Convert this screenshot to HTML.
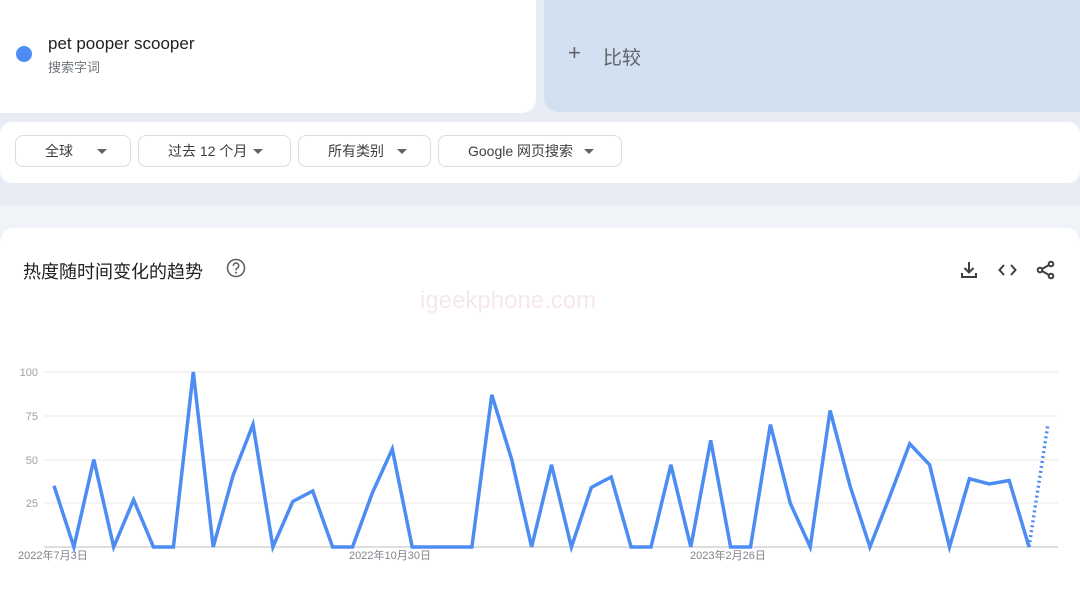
<!DOCTYPE html>
<html><head><meta charset="utf-8"><style>
body{margin:0;width:1080px;height:591px;overflow:hidden;background:#e8edf5;font-family:"Liberation Sans","Noto Sans CJK SC",sans-serif;position:relative}
.abs{position:absolute}
.btn{position:absolute;top:135px;height:32px;border:1px solid #dadce0;border-radius:8px;background:#fff;box-sizing:border-box;font-size:14px;color:#3c4043;line-height:30px}
.btn .a{position:absolute;top:13px;width:0;height:0;border-left:5px solid transparent;border-right:5px solid transparent;border-top:5px solid #5f6368}
</style></head><body>
<div class="abs" style="left:0;top:0;width:536px;height:113px;background:#fff;border-radius:0 0 14px 0"></div>
<div class="abs" style="left:16px;top:46px;width:16px;height:16px;border-radius:50%;background:#4d8df3"></div>
<div class="abs" style="left:48px;top:34px;font-size:17px;color:#202124">pet pooper scooper</div>
<div class="abs" style="left:48px;top:57px;font-size:13px;color:#70757a">搜索字词</div>
<div class="abs" style="left:544px;top:0;width:536px;height:112px;background:#d3e0f2;border-radius:0 0 0 14px"></div>
<div class="abs" style="left:568px;top:40px;font-size:22px;color:#5f6368">+</div>
<div class="abs" style="left:603px;top:43px;font-size:19px;color:#5f6368">比较</div>
<div class="abs" style="left:0;top:122px;width:1080px;height:61px;background:#fff;border-radius:12px"></div>
<div class="btn" style="left:15px;width:116px"><span style="position:absolute;left:29px">全球</span><span class="a" style="left:81px"></span></div>
<div class="btn" style="left:138px;width:153px"><span style="position:absolute;left:29px">过去 12 个月</span><span class="a" style="left:114px"></span></div>
<div class="btn" style="left:298px;width:133px"><span style="position:absolute;left:29px">所有类别</span><span class="a" style="left:98px"></span></div>
<div class="btn" style="left:438px;width:184px"><span style="position:absolute;left:29px">Google 网页搜索</span><span class="a" style="left:145px"></span></div>
<div class="abs" style="left:0;top:205px;width:1080px;height:30px;background:#f0f3f8"></div>
<div class="abs" style="left:0;top:228px;width:1080px;height:363px;background:#fff;border-radius:14px 14px 0 0"></div>
<div class="abs" style="left:23px;top:258px;font-size:18px;color:#202124">热度随时间变化的趋势</div>
<svg class="abs" style="left:226px;top:258px" width="20" height="20" viewBox="0 0 20 20"><circle cx="10" cy="10" r="8.5" fill="none" stroke="#5f6368" stroke-width="1.6"/><path d="M7.3 7.8a2.7 2.7 0 1 1 3.6 2.5c-.6.3-.9.7-.9 1.4v.6" fill="none" stroke="#5f6368" stroke-width="1.6"/><circle cx="10" cy="14.6" r="1" fill="#5f6368"/></svg>
<svg class="abs" style="left:958px;top:260px" width="100" height="20" viewBox="0 0 100 20" fill="none" stroke="#3c4043" stroke-width="2"><path d="M11 2v10M6.5 8l4.5 4.5 4.5-4.5M4 13v4h14v-4"/><path d="M46 5l-4.5 5 4.5 5M53 5l4.5 5-4.5 5"/><circle cx="93" cy="4" r="2.3"/><circle cx="82" cy="10" r="2.3"/><circle cx="93" cy="16" r="2.3"/><path d="M84 9l7-4M84 11l7 4"/></svg>
<div class="abs" style="left:420px;top:287px;font-size:24px;color:#f6e7ee">igeekphone.com</div>
<svg class="abs" style="left:0;top:360px" width="1080" height="231">
<g stroke="#e8e8e8" stroke-width="1"><line x1="44" y1="12" x2="1058" y2="12"/><line x1="44" y1="56" x2="1058" y2="56"/><line x1="44" y1="100" x2="1058" y2="100"/><line x1="44" y1="143" x2="1058" y2="143"/></g>
<line x1="44" y1="187" x2="1058" y2="187" stroke="#bdbdbd"/>
<g font-size="11" fill="#9aa0a6" text-anchor="end" font-family="Liberation Sans"><text x="38" y="16">100</text><text x="38" y="60">75</text><text x="38" y="104">50</text><text x="38" y="147">25</text></g>
<g font-size="11" fill="#80868b" font-family="Liberation Sans,Noto Sans CJK SC,sans-serif"><text x="18" y="199">2022年7月3日</text><text x="349" y="199">2022年10月30日</text><text x="690" y="199">2023年2月26日</text></g>
<polyline id="p" fill="none" stroke="#4d8df3" stroke-width="3.5" stroke-linejoin="miter" points="" />
<line x1="1029" y1="187" x2="1048" y2="64" stroke="#4d8df3" stroke-width="3.5" stroke-dasharray="2 3"/>
</svg>
<script>
var v=[35,0,50,0,27,0,0,100,0,41,70,0,26,32,0,0,31,56,0,0,0,0,87,50,0,47,0,34,40,0,0,47,0,61,0,0,70,25,0,78,35,0,29,59,47,0,39,36,38,0];
document.getElementById('p').setAttribute('points',v.map(function(y,i){return (54+i*19.9).toFixed(1)+','+(187-1.75*y).toFixed(1)}).join(' '));
</script>
</body></html>
